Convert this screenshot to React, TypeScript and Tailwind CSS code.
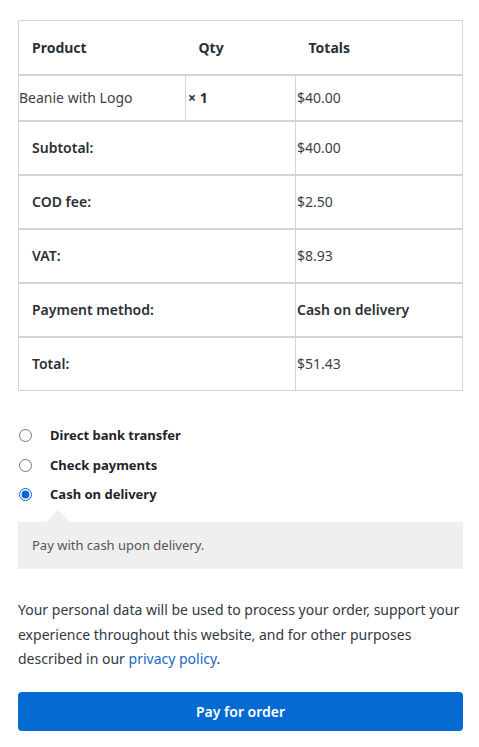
import { useState } from 'react';

const methods = [
    { id: 'bacs', label: 'Direct bank transfer' },
    { id: 'cheque', label: 'Check payments' },
    { id: 'cod', label: 'Cash on delivery' },
];

const totals = [
    { label: 'Subtotal:', value: '$40.00' },
    { label: 'COD fee:', value: '$2.50' },
    { label: 'VAT:', value: '$8.93' },
    { label: 'Payment method:', value: 'Cash on delivery', strong: true },
    { label: 'Total:', value: '$51.43' },
];

export default function App() {
    const [method, setMethod] = useState('cod');

    return (
        <main className="min-h-screen bg-white pl-[18px] pr-[16px] pt-5 pb-4 text-[14px] text-[#2b2f36] font-['Noto_Sans','Open_Sans',sans-serif]">
            {/* Order summary */}
            <table className="w-full table-fixed border-collapse border border-[#d3d5da]">
                <colgroup>
                    <col className="w-[167px]" />
                    <col className="w-[110px]" />
                    <col />
                </colgroup>
                <thead>
                    <tr className="h-[54px] border-b-2 border-[#d3d5da]">
                        <th className="pl-[13px] text-left font-bold">Product</th>
                        <th className="pl-[13px] text-left font-bold">Qty</th>
                        <th className="pl-[13px] text-left font-bold">Totals</th>
                    </tr>
                </thead>
                <tbody>
                    <tr className="h-[46px] border-b-2 border-[#d3d5da]">
                        <td className="border-r border-[#d3d5da] pl-0 text-[#3a3f47]">Beanie with Logo</td>
                        <td className="border-r border-[#d3d5da] pl-[2px] font-bold">× 1</td>
                        <td className="pl-[1px] text-[#3a3f47]">$40.00</td>
                    </tr>
                </tbody>
                <tfoot>
                    {totals.map((row) => (
                        <tr key={row.label} className="h-[54px] border-b-2 border-[#d3d5da] last:border-b">
                            <th colSpan={2} className="border-r border-[#d3d5da] pl-[13px] text-left font-semibold">
                                {row.label}
                            </th>
                            <td className={`pl-[1px] ${row.strong ? 'font-semibold' : 'text-[#3a3f47]'}`}>
                                {row.value}
                            </td>
                        </tr>
                    ))}
                </tfoot>
            </table>

            {/* Payment methods */}
            <ul className="mt-[35px] flex flex-col gap-[10px]">
                {methods.map((m) => (
                    <li key={m.id} className="flex items-center">
                        <input
                            type="radio"
                            name="payment"
                            checked={method === m.id}
                            onChange={() => setMethod(m.id)}
                            className="ml-[1px] h-[13px] w-[13px] accent-[#0a66d8]"
                        />
                        <label className="ml-[18px] text-[13px] font-bold text-[#1f232a]">{m.label}</label>
                    </li>
                ))}
            </ul>

            <div className="relative mt-[17px] bg-[#efefef] px-[14px] py-[14px] text-[13px] text-[#50555c]">
                <span className="absolute -top-[12px] left-[28px] h-0 w-0 border-x-[12px] border-b-[12px] border-x-transparent border-b-[#efefef]" />
                Pay with cash upon delivery.
            </div>

            {/* Privacy notice */}
            <p className="mt-[29px] text-[14px] leading-[24.5px] text-[#33383f]">
                Your personal data will be used to process your order, support your experience throughout this
                website, and for other purposes described in our{' '}
                <a href="#" className="text-[#1668c7]">privacy policy</a>.
            </p>

            <button
                type="button"
                className="mt-[20px] h-[39px] w-full rounded-[4px] bg-[#056bd3] text-[14px] font-semibold text-white"
            >
                Pay for order
            </button>
        </main>
    );
}
